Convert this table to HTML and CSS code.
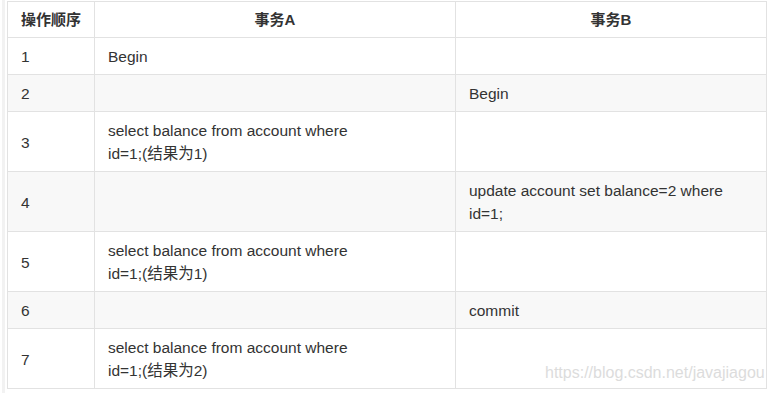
FILE: index.html
```html
<!DOCTYPE html>
<html>
<head>
    <title>事务隔离 - 不可重复读</title>
    <link rel="stylesheet" href="styles.css">
</head>
<body>
    <div class="page">
        <table class="tx-table">
            <colgroup>
                <col class="col-step">
                <col class="col-a">
                <col class="col-b">
            </colgroup>
            <thead>
                <tr>
                    <th>操作顺序</th>
                    <th>事务A</th>
                    <th>事务B</th>
                </tr>
            </thead>
            <tbody>
                <tr>
                    <td>1</td>
                    <td>Begin</td>
                    <td></td>
                </tr>
                <tr>
                    <td>2</td>
                    <td></td>
                    <td>Begin</td>
                </tr>
                <tr>
                    <td>3</td>
                    <td>select balance from account where<br>id=1;(结果为1)</td>
                    <td></td>
                </tr>
                <tr>
                    <td>4</td>
                    <td></td>
                    <td>update account set balance=2 where<br>id=1;</td>
                </tr>
                <tr>
                    <td>5</td>
                    <td>select balance from account where<br>id=1;(结果为1)</td>
                    <td></td>
                </tr>
                <tr>
                    <td>6</td>
                    <td></td>
                    <td>commit</td>
                </tr>
                <tr>
                    <td>7</td>
                    <td>select balance from account where<br>id=1;(结果为2)</td>
                    <td></td>
                </tr>
            </tbody>
        </table>
        <div class="watermark">https://blog.csdn.net/javajiagou</div>
    </div>
</body>
</html>
```

FILE: styles.css
```css
/* Base */
* {
    margin: 0;
    padding: 0;
    box-sizing: border-box;
}

body {
    background: #fff;
    color: #333;
    font-family: "Liberation Sans", "Noto Sans CJK SC", sans-serif;
    font-size: 15.5px;
}

.page {
    position: relative;
    height: 393px;
    padding: 1px 0 0 2px;
    margin-left: 2px;
    border-left: 3px solid #f2f2f2;
}

/* Table */
.tx-table {
    border-collapse: collapse;
    table-layout: fixed;
    width: 759px;
}

.col-step {
    width: 87px;
}

.col-a {
    width: 361px;
}

.col-b {
    width: 311px;
}

.tx-table th,
.tx-table td {
    border: 1px solid #e2e2e2;
    line-height: 23px;
    vertical-align: middle;
    text-align: left;
}

.tx-table th {
    padding: 6px 10px 6px;
    font-size: 15px;
    font-weight: bold;
    text-align: center;
    white-space: nowrap;
    color: #333;
}

.tx-table td {
    padding: 7px 13px 6px;
    white-space: nowrap;
}

.tx-table tbody tr:nth-child(even) {
    background: #f8f8f8;
}

/* CSDN watermark over the last row */
.watermark {
    position: absolute;
    left: 540px;
    top: 364px;
    font-size: 16px;
    color: #dcdcdc;
    text-shadow: 0 0 1px #fff;
}
```
